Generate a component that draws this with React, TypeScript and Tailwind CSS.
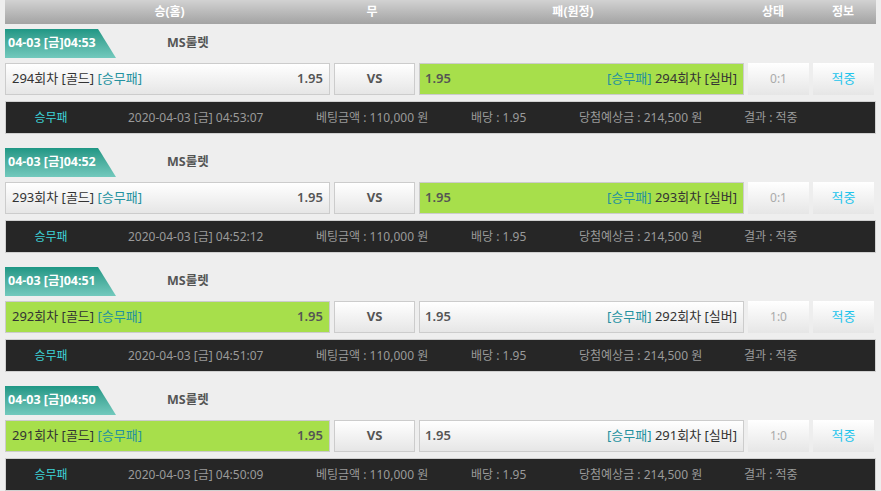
import React from "react"

const rounds = [
  { round: 294, tab: "04-03 [금]04:53", time: "04:53:07", winner: "away", score: "0:1" },
  { round: 293, tab: "04-03 [금]04:52", time: "04:52:12", winner: "away", score: "0:1" },
  { round: 292, tab: "04-03 [금]04:51", time: "04:51:07", winner: "home", score: "1:0" },
  { round: 291, tab: "04-03 [금]04:50", time: "04:50:09", winner: "home", score: "1:0" },
]

const font = { fontFamily: '"Noto Sans", "Noto Sans CJK KR", sans-serif' }

const boxBase = "h-[32px] flex items-center border border-[#cccccc]"
const boxWhite = "bg-gradient-to-b from-[#ffffff] to-[#e6e6e6]"
const boxGreen = "bg-[#a7df4b]"

function Group({ r }: { r: (typeof rounds)[number] }) {
  const homeWin = r.winner === "home"
  return (
    <div className="flex flex-col">
      <div className="flex items-center h-[29px]">
        <div
          className="h-[29px] w-[111px] flex items-center pl-[3px] bg-gradient-to-b from-[#1e9785] to-[#72c9bd] text-white text-[12.5px] font-bold"
          style={{ clipPath: "polygon(0 0, 93px 0, 111px 100%, 0 100%)" }}
        >
          {r.tab}
        </div>
        <div className="ml-[51px] text-[12.5px] font-bold text-[#555555]">MS룰렛</div>
      </div>

      <div className="flex gap-[4px] mt-[5px] text-[13px]">
        <div className={`${boxBase} ${homeWin ? boxGreen : boxWhite} w-[325px] justify-between pl-[6px] pr-[6px]`}>
          <span className="text-[#333333]">
            {r.round}회차 [골드] <span className="text-[#23919f]">[승무패]</span>
          </span>
          <span className="text-[#555555] font-semibold">1.95</span>
        </div>
        <div className={`${boxBase} ${boxWhite} w-[81px] justify-center font-bold text-[#555555]`}>VS</div>
        <div className={`${boxBase} ${homeWin ? boxWhite : boxGreen} w-[325px] justify-between pl-[5px] pr-[6px]`}>
          <span className="text-[#555555] font-semibold">1.95</span>
          <span className="text-[#333333]">
            <span className="text-[#23919f]">[승무패]</span> {r.round}회차 [실버]
          </span>
        </div>
        <div className={`h-[32px] flex items-center justify-center ${boxWhite} w-[61px] text-[12px] text-[#aaaaaa]`}>{r.score}</div>
        <div className={`h-[32px] flex items-center justify-center ${boxWhite} w-[61px] text-[#22c4ec]`}>적중</div>
      </div>

      <div className="mt-[6px] h-[33px] w-[871px] flex items-center bg-[#262626] border border-[#d0d0d0] text-[12px] text-[#9a9a9a]">
        <span className="w-[90px] text-center text-[#3dd3d6]">승무패</span>
        <span className="w-[32px]" />
        <span className="w-[188px]">2020-04-03 [금] {r.time}</span>
        <span className="w-[155px]">베팅금액 : 110,000 원</span>
        <span className="w-[108px]">배당 : 1.95</span>
        <span className="w-[165px]">당첨예상금 : 214,500 원</span>
        <span>결과 : 적중</span>
      </div>
    </div>
  )
}

export default function App() {
  return (
    <div className="w-[881px] h-[491px] overflow-hidden bg-[#eeeeee] px-[5px]" style={font}>
      <div className="h-[24px] w-[871px] flex items-center bg-gradient-to-b from-[#d2d2d2] to-[#a3a3a3] text-white text-[12px] font-bold">
        <div className="w-[329px] text-center">승(홈)</div>
        <div className="w-[76px] text-center">무</div>
        <div className="w-[326px] text-center">패(원정)</div>
        <div className="w-[74px] text-center">상태</div>
        <div className="w-[66px] text-center">정보</div>
      </div>
      <div className="flex flex-col gap-[14px] mt-[5px]">
        {rounds.map((r) => (
          <Group key={r.round} r={r} />
        ))}
      </div>
    </div>
  )
}
